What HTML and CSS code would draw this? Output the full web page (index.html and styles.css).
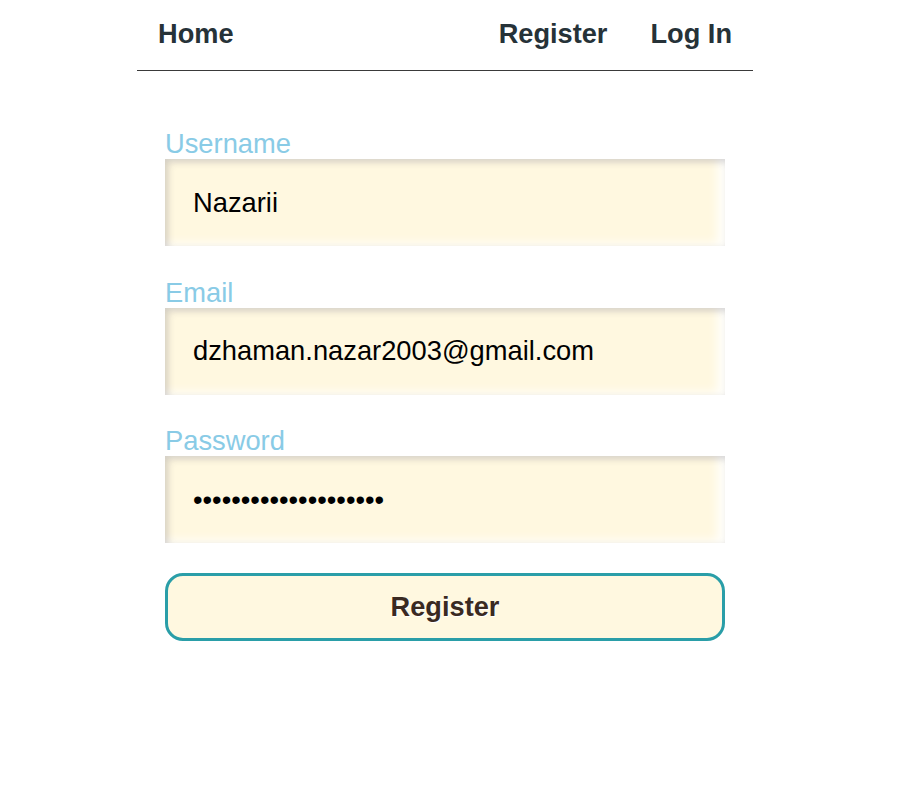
FILE: index.html
```html
<!DOCTYPE html>
<html lang="en">
<head>
<meta charset="utf-8">
<title>Register</title>
<link rel="stylesheet" href="styles.css">
</head>
<body>
<div class="page">
  <header class="nav">
    <a class="nav-link" href="#">Home</a>
    <nav class="nav-right">
      <a class="nav-link" href="#">Register</a>
      <a class="nav-link" href="#">Log In</a>
    </nav>
  </header>
  <form class="form">
    <label class="label" for="u">Username</label>
    <input class="field" id="u" type="text" value="Nazarii">
    <label class="label" for="e">Email</label>
    <input class="field" id="e" type="email" value="dzhaman.nazar2003@gmail.com">
    <label class="label" for="p">Password</label>
    <input class="field" id="p" type="password" value="nazariipassword20031">
    <button class="btn" type="button">Register</button>
  </form>
</div>
</body>
</html>
```

FILE: styles.css
```css
html, body {
  margin: 0;
  padding: 0;
  background: #ffffff;
}
body {
  padding-right: 20px;
  font-family: "Liberation Sans", Arial, sans-serif;
}
.page {
  width: 616px;
  margin: 0 auto;
}
.nav {
  display: flex;
  justify-content: space-between;
  align-items: center;
  height: 70px;
  border-bottom: 1px solid #3a3a3a;
}
.nav-right {
  display: flex;
  gap: 1px;
}
.nav-link {
  font-size: 27.2px;
  font-weight: bold;
  color: #263238;
  text-decoration: none;
  padding: 0 21px;
  line-height: 31px;
  margin-top: -4px;
}
.form {
  display: flex;
  flex-direction: column;
  padding: 57px 28px 0;
}
.label {
  font-size: 27.3px;
  line-height: 31px;
  color: #89cbe6;
}
.field {
  box-sizing: border-box;
  width: 560px;
  height: 87px;
  margin: 0 0 30.5px;
  padding: 0 28px;
  border: none;
  outline: none;
  background: #fff8e0;
  font-family: "Liberation Sans", Arial, sans-serif;
  font-size: 27.3px;
  color: #000;
  box-shadow: inset 3px 3px 7px rgba(60, 60, 80, 0.22), inset -8px -3px 10px rgba(255, 255, 255, 0.85);
}
.btn {
  box-sizing: border-box;
  width: 560px;
  height: 68px;
  margin-top: -0.5px;
  border: 3px solid #2a9ea8;
  border-radius: 18px;
  background: #fff8e0;
  font-family: "Liberation Sans", Arial, sans-serif;
  font-size: 27.2px;
  font-weight: bold;
  color: #3a2a22;
  text-shadow: 1px 1px 0 #ffffff;
  cursor: pointer;
}
```
